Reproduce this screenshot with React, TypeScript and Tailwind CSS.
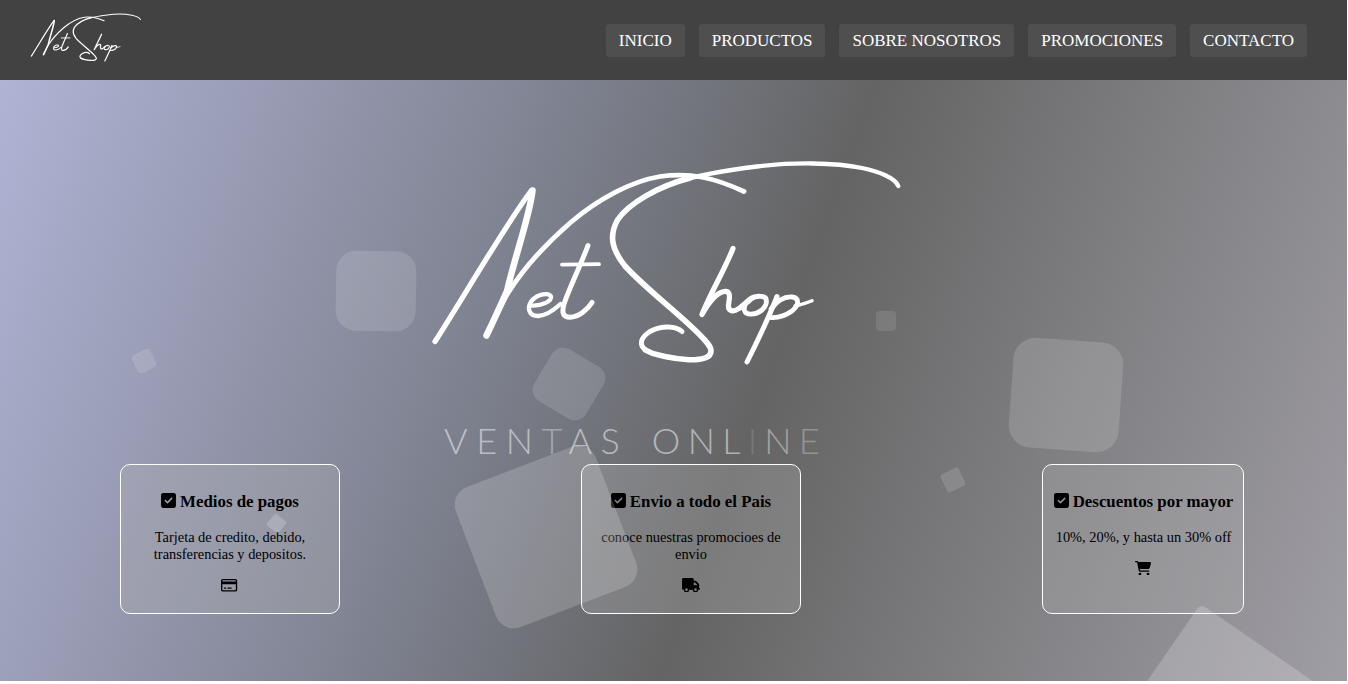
import type { ReactNode } from 'react';
import { FaSquareCheck, FaRegCreditCard, FaTruck, FaCartShopping } from 'react-icons/fa6';

const NAV = ['INICIO', 'PRODUCTOS', 'SOBRE NOSOTROS', 'PROMOCIONES', 'CONTACTO'];

function Signature({ className }: { className: string }) {
  return (
    <svg viewBox="425 155 480 215" className={className} fill="none" stroke="white" strokeLinecap="round" strokeLinejoin="round" aria-label="NetShop">
      <path strokeWidth="5.2" d="M435 341.5C463 298 506 224 531 191" />
      <path strokeWidth="6.5" d="M532.5 190.5C530 215 515 256 507 291C499 309 493 322 486.500 335.500" />
      <path strokeWidth="4.800" d="M486.500 335.500C495 318 502 303 508 293C525 266 547 243 570 223C598 199 632 181 660 176.500C690 172 715 178 744 191.500" />
      <path strokeWidth="4.300" d="M532 305.5C542 306 552 301 551 296.500C549 292.500 538 293.500 531.500 301C526.500 308 529 316 538 316C547 315.500 554 310 560.500 304" />
      <path strokeWidth="5" d="M588 245.500C580 267 566 295 563.500 306C562 313 563 317 570 317.300C579 317 588 309 592 302.500" />
      <path strokeWidth="3.800" d="M562 264.600L599 264.200" />
      <path strokeWidth="4.300" d="M898.300 186C895 178 879 171.500 862 168C835 162.500 793 162 757 166.500C728 170 699 175 676 182" />
      <path strokeWidth="5.600" d="M690 178C659 186 629 203 617.500 220C608 237 613 251 625 266C646 289 676 311 698 333C707 342 711.500 347 711 351.500C710.500 358 702 360 689 359.800C675 359 653 355 645.500 350" />
      <path strokeWidth="5" d="M645.500 350C639 345 640 338 650 331.500C662 325 676 326 682 331.500" />
      <path strokeWidth="5.200" d="M733 248.500C725 269 710 294 702 314.500C708 304 715 293 724 291.500C732 290.500 729 300 728.500 305C728 312 734 312 738 309C742 307 744 304 748 301" />
      <path strokeWidth="4.800" d="M757 296.500C749 297 743 305 744.500 310.500C746 315.500 755 315.500 762 310C768 304 768 297 762 296.500C757 295.500 751 298 748 302" />
      <path strokeWidth="5" d="M777 296.500C769 317 757 342 747 362" />
      <path strokeWidth="4.800" d="M771 309C777 301 785 296.500 792 297C800 298 799 305 792 311C785 316 778 318 771 317.500" />
      <path strokeWidth="3.400" d="M795 306C801 305 806 303 812 300.800" />
    </svg>
  );
}

function Card({ title, text, icon, className }: { title: string; text: string; icon: ReactNode; className: string }) {
  return (
    <article className={`h-[150px] shrink-0 rounded-[10px] border border-white bg-[#b4b4b4]/30 pt-[10px] text-center text-[14.4px] leading-[17px] ${className}`}>
      <h3 className="mt-[17px] flex items-center justify-center gap-1 whitespace-nowrap text-[16.85px] font-bold leading-[19px]">
        <FaSquareCheck className="relative -top-px h-[17px] w-[15px]" />
        {title}
      </h3>
      <p className="mt-[18px]">{text}</p>
      <div className="mt-[15px] flex justify-center">{icon}</div>
    </article>
  );
}

const SQUARES = [
  'left-[336px] top-[171px] size-20 rounded-[20px] rotate-1 bg-white/[0.13]',
  'left-[134px] top-[271px] size-5 rounded-[4px] rotate-[-27deg] bg-white/[0.13]',
  'left-[539px] top-[274px] size-[60px] rounded-[13px] rotate-[31deg] bg-white/[0.13]',
  'left-[876px] top-[231px] size-5 rounded-[4px] bg-white/10',
  'left-[1011px] top-[260px] size-[110px] rounded-[22px] rotate-[4deg] bg-white/15',
  'left-[943px] top-[390px] size-5 rounded-[3px] rotate-[-25deg] bg-white/[0.13]',
  'left-[471px] top-[382px] size-[150px] rounded-[19px] rotate-[-21deg] bg-white/[0.18]',
  'left-[269px] top-[436px] size-[15px] rounded-[2px] rotate-[40deg] bg-white/20',
  'left-[1141px] top-[555px] size-[160px] rounded-[6px] rotate-[34.6deg] bg-white/20',
];

export default function App() {
  return (
    <div className="w-[1347px] font-['Liberation_Serif',serif] text-black">
      <header className="flex h-20 items-center justify-between bg-[#424242] pl-[29px] pr-10">
        <Signature className="mb-[6px] h-[51px] w-[113px]" />
        <nav className="flex gap-[14px]">
          {NAV.map((item) => (
            <a key={item} href="#" className="h-[33px] rounded-[3px] bg-[#4f4f4f] px-[13px] text-[17px] leading-[33px] text-white">
              {item}
            </a>
          ))}
        </nav>
      </header>
      <main className="relative h-[601px] overflow-hidden bg-[linear-gradient(110deg,#b0b3d4_0%,#7c808d_38%,#646464_56%,#a09ea5_100%)] pt-[75px]">
        <Signature className="ml-[425px] h-[215px] w-[480px]" />
        <div className="ml-[444px] mt-[48px] mb-px h-[45px] whitespace-nowrap font-['Lato',sans-serif] text-[36px] font-light leading-[45px] tracking-[8.6px] text-white/50">
          VEN<span className="text-white/35">T</span>AS{' '}
          <span className="ml-[5px] tracking-[7.3px]">
            ONL<span className="text-white/15">I</span><span className="text-white/40">N</span><span className="text-white/30">E</span>
          </span>
        </div>
        <section className="flex gap-[241px] pl-[120px]">
          <Card className="w-[220px] px-[10px]" title="Medios de pagos" text="Tarjeta de credito, debido, transferencias y depositos." icon={<FaRegCreditCard className="mr-px h-[14.4px] w-[16.2px]" />} />
          <Card className="w-[220px] px-[10px]" title="Envio a todo el Pais" text="conoce nuestras promocioes de envio" icon={<FaTruck className="mr-px h-[14.4px] w-[18px]" />} />
          <Card className="w-[202px] pl-[10.5px] pr-[9.5px]" title="Descuentos por mayor" text="10%, 20%, y hasta un 30% off" icon={<FaCartShopping className="mr-px h-[14.4px] w-[16.2px]" />} />
        </section>
        {SQUARES.map((square) => (
          <span key={square} className={`pointer-events-none absolute ${square}`} />
        ))}
      </main>
    </div>
  );
}
